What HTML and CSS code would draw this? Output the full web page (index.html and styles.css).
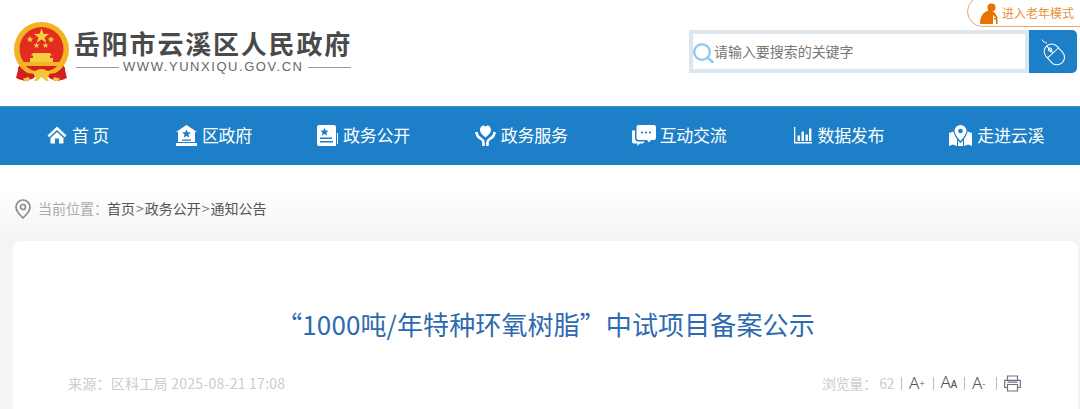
FILE: index.html
```html
<!DOCTYPE html>
<html lang="zh-CN">
<head>
<meta charset="utf-8">
<title>岳阳市云溪区人民政府</title>
<link rel="stylesheet" href="styles.css">
</head>
<body>
<header class="top">
  <div class="brand">
    <svg class="emblem" viewBox="0 0 58 60" width="58" height="60">
      <path d="M6 44 L3 56 L12 59 L19 55 L38 55 L45 59 L54 56 L51 44 Z" fill="#d3201f"/>
      <circle cx="28.500" cy="27.500" r="27.500" fill="#f1b422"/>
      <circle cx="28.500" cy="27" r="22" fill="#e22c20"/>
      <path d="M28.500 6.500l1.900 5.300 5.700.1-4.500 3.500 1.600 5.400-4.700-3.200-4.700 3.200 1.600-5.400-4.500-3.500 5.700-.1z" fill="#f6cf3e"/>
      <path d="M17 14l.9 2.300 2.500.1-2 1.500.7 2.400-2.100-1.400-2.100 1.400.7-2.400-2-1.500 2.500-.1z" fill="#f6cf3e"/>
      <path d="M38 14l.9 2.300 2.500.1-2 1.500.7 2.400-2.100-1.400-2.100 1.400.7-2.400-2-1.500 2.500-.1z" fill="#f6cf3e"/>
      <path d="M23.500 20.500l.8 2 2.200.1-1.700 1.300.6 2.100-1.900-1.200-1.900 1.200.6-2.100-1.700-1.300 2.200-.1z" fill="#f6cf3e"/>
      <path d="M32.500 20.500l.8 2 2.200.1-1.700 1.300.6 2.100-1.900-1.200-1.900 1.200.6-2.100-1.700-1.300 2.200-.1z" fill="#f6cf3e"/>
      <path d="M20 31h17l2 2.500h-2v2.500h3v4H17v-4h3v-2.500h-2z" fill="#f6cf3e"/>
      <path d="M7 40h43l-1 3c-4 6-12 9-20.500 9S12 49 8 43z" fill="#f1b422"/>
      <path d="M13 44h31c-4 4-9 5.500-15.500 5.500S17 48 13 44z" fill="#d3201f"/>
      <path d="M5 45l9 6 7 1v4l-7 3-9-2z" fill="#d3201f"/>
      <path d="M52 45l-9 6-7 1v4l7 3 9-2z" fill="#d3201f"/>
      <path d="M20 51c3-3 5.500-4 8.500-4s5.500 1 8.500 4l-3 5 2 3h-3l-4.500-4-4.500 4h-3l2-3z" fill="#f4c63a"/>
      <path d="M10 56.500l6-1.500 1 3-5 1.500zM47 56.500l-6-1.500-1 3 5 1.500z" fill="#f4c63a"/>
    </svg>
    <div class="brand-text">
      <div class="brand-name">岳阳市云溪区人民政府</div>
      <div class="brand-url"><span class="rule"></span><span>WWW.YUNXIQU.GOV.CN</span><span class="rule"></span></div>
    </div>
  </div>
  <div class="tools">
    <a class="elder">
      <svg viewBox="0 0 20 22" width="20" height="22">
        <circle cx="12.500" cy="4.500" r="4" fill="#e67300"/>
        <path d="M8 8c3-1 6 0 8 2l3 5h-2l-3-3v9H1c0-6 2-11 7-13z" fill="#e67300"/>
        <path d="M15 15h3.500v6H17v-4.500h-2z" fill="#e67300"/>
      </svg>
      <span>进入老年模式</span>
    </a>
    <form class="search">
      <div class="search-box">
        <svg class="search-icon" viewBox="0 0 22 22" width="22" height="22">
          <circle cx="10" cy="10" r="7.800" fill="none" stroke="#8ccbf5" stroke-width="2.400"/>
          <path d="M15.500 15.500l5 4.500" stroke="#8ccbf5" stroke-width="2.600" stroke-linecap="round"/>
        </svg>
        <span class="placeholder">请输入要搜索的关键字</span>
      </div>
      <div class="search-btn">
        <svg viewBox="0 0 28 28" width="28" height="28" fill="none" stroke="#fff" stroke-width="1">
          <path d="M3 1.500c1 2.500 3 3 5 3.500"/>
          <g transform="rotate(-42 15 16)">
            <rect x="7.500" y="5" width="15" height="23" rx="7.500"/>
            <path d="M7.700 14.500h14.600M15 5v9.500"/>
            <rect x="13.500" y="8.500" width="3" height="3.500" rx="1.500"/>
          </g>
        </svg>
      </div>
    </form>
  </div>
</header>

<nav class="nav">
  <a class="nav-item nav-home">
    <svg viewBox="0 0 20 20" width="20" height="20" fill="#fff"><path d="M10 1.500L.5 10.500l1.800 1.800L10 5l7.700 7.300 1.800-1.800z"/><path d="M10 7l-6.500 6v5.500h4.500v-5h4v5h4.500V13z"/></svg>
    <span>首 页</span>
  </a>
  <a class="nav-item">
    <svg viewBox="0 0 21 21" width="21" height="21" fill="#fff"><path d="M10.500 0L0 7h2v10h17V7h2z"/><path d="M0 18h21v3H0z"/><path d="M10.500 4.500l1.300 2.800 3 .3-2.300 2 .7 3-2.700-1.500-2.700 1.500.7-3-2.300-2 3-.3z" fill="#1c7fc7"/><path d="M6 14.500h9v1.300H6z" fill="#1c7fc7"/></svg>
    <span>区政府</span>
  </a>
  <a class="nav-item">
    <svg viewBox="0 0 21 21" width="21" height="21" fill="#fff"><path d="M2 0h15a2 2 0 0 1 2 2v19H2a2 2 0 0 1-2-2V2a2 2 0 0 1 2-2z"/><path d="M20 8h1v11h-1z"/><path d="M7.500 3l1.200 2.500 2.800.3-2.100 1.900.6 2.700L7.500 9l-2.500 1.400.6-2.700-2.100-1.900 2.800-.3z" fill="#1c7fc7"/><path d="M3 12.500h12v1.500H3zM3 16h13v1.500H3z" fill="#1c7fc7"/></svg>
    <span>政务公开</span>
  </a>
  <a class="nav-item">
    <svg viewBox="0 0 21 21" width="21" height="21" fill="#fff"><path d="M10.500 12.500C6.500 9.500 5 7.500 5 4.800 5 2 7 .5 8.500.5c1 0 1.500.6 2 1.300.5-.7 1-1.300 2-1.300C14 .5 16 2 16 4.800c0 2.700-1.500 4.700-5.500 7.700z"/><path d="M1.500 7c0 4 2.500 5.700 4.700 7 1.300.8 2.300 1.400 2.300 3.500V21M19.500 7c0 4-2.500 5.700-4.700 7-1.300.8-2.300 1.400-2.300 3.500V21" fill="none" stroke="#fff" stroke-width="2.600"/></svg>
    <span>政务服务</span>
  </a>
  <a class="nav-item nav-chat">
    <svg viewBox="0 0 24 21" width="24" height="21" fill="#fff"><path d="M6.500 0H22a2 2 0 0 1 2 2v11a2 2 0 0 1-2 2h-3l-2 2.500L15 15H6.500a2 2 0 0 1-2-2V2a2 2 0 0 1 2-2z"/><circle cx="10" cy="7.500" r="1.100" fill="#1c7fc7"/><circle cx="14" cy="7.500" r="1.100" fill="#1c7fc7"/><circle cx="18" cy="7.500" r="1.100" fill="#1c7fc7"/><path d="M0 5.500h3v8c0 1.500 1 3 3 3h7l-2 2H8L5.500 21v-2.500H2a2 2 0 0 1-2-2z"/></svg>
    <span>互动交流</span>
  </a>
  <a class="nav-item nav-data">
    <svg viewBox="0 0 18 18" width="18" height="18" fill="#fff"><path d="M0 1h1.300v15H18v1.500H0z"/><path d="M3.500 9.500h2.400V15H3.500zM7.500 5.500h2.400V15H7.500zM11.500 8.500h2.400V15h-2.400zM15 2.500h2.400V15H15z"/></svg>
    <span>数据发布</span>
  </a>
  <a class="nav-item">
    <svg viewBox="0 0 23 21" width="23" height="21" fill="#fff"><path fill-rule="evenodd" d="M11.500 0A6 6 0 0 0 5.500 6c0 3.500 6 10 6 10s6-6.500 6-10a6 6 0 0 0-6-6zm0 8.300a2.300 2.300 0 1 1 0-4.600 2.300 2.300 0 0 1 0 4.600z"/><path d="M0 8l4.500-1.500c.3 2.500 2 5.500 3.500 7.500v7L4 19.500 0 21z"/><path d="M9 15.500l2.500 2.700 2.500-2.700V21H9z"/><path d="M23 8l-4.500-1.500c-.3 2.500-2 5.500-3.500 7.500v7l4-1.500 4 1.500z"/></svg>
    <span>走进云溪</span>
  </a>
</nav>

<main class="page">
  <div class="crumbs">
    <svg viewBox="0 0 16 20" width="16" height="20" fill="none" stroke="#8c8c8c" stroke-width="1.700"><path d="M8 1a7 7 0 0 0-7 7c0 4.500 7 11 7 11s7-6.500 7-11a7 7 0 0 0-7-7z"/><circle cx="8" cy="8" r="2.500"/></svg>
    <div class="crumb-text"><span class="crumb-label">当前位置：</span><span class="crumb-path">首页<i>&gt;</i>政务公开<i>&gt;</i>通知公告</span></div>
  </div>
  <article class="card">
    <h1 class="title">“1000吨/年特种环氧树脂”中试项目备案公示</h1>
    <div class="meta">
      <div class="source">来源：区科工局 2025-08-21 17:08</div>
      <div class="actions">
        <span class="views">浏览量： 62</span>
        <span class="sep"></span>
        <span class="font-btn">A<sup>+</sup></span>
        <span class="sep"></span>
        <span class="font-btn">A<small>A</small></span>
        <span class="sep"></span>
        <span class="font-btn">A<sup>-</sup></span>
        <span class="sep"></span>
        <svg viewBox="0 0 17 17" width="17" height="17" fill="none" stroke="#6b7280" stroke-width="1.200"><path d="M3.500 5V1h10v4M3.500 12.500H.7V5.300h15.600v7.200h-2.800"/><path d="M3.500 9.500h10V16h-10zM3.500 7.200h10"/></svg>
      </div>
    </div>
  </article>
</main>
</body>
</html>
```

FILE: styles.css
```css
* { box-sizing: border-box; }
html, body { margin: 0; padding: 0; }
body {
  width: 1080px;
  height: 409px;
  overflow: hidden;
  background: #fff;
  font-family: "Noto Sans CJK SC", "Liberation Sans", sans-serif;
}

.top {
  height: 106px;
  display: flex;
  justify-content: space-between;
}
.brand {
  display: flex;
  align-items: flex-start;
  padding: 22px 0 0 13px;
}
.emblem { flex: none; }
.brand-text { margin: 6px 0 0 3px; }
.brand-name {
  font-size: 26px;
  line-height: 30px;
  font-weight: 700;
  color: #4a4a4a;
  letter-spacing: 1.800px;
  white-space: nowrap;
}
.brand-url {
  display: flex;
  align-items: center;
  gap: 4px;
  margin: 1px 0 0 2px;
  font-family: "Liberation Sans", sans-serif;
  font-size: 13px;
  line-height: 16px;
  letter-spacing: 1.550px;
  color: #666;
  white-space: nowrap;
}
.rule { width: 43px; height: 1px; background: #999; }

.tools {
  width: 391px;
  position: relative;
  padding-top: 30px;
}
.elder {
  position: absolute;
  top: -4px;
  left: 278px;
  width: 130px;
  height: 31px;
  padding: 1px 0 0 11px;
  display: flex;
  align-items: center;
  gap: 3px;
  border: 1px solid #f0a868;
  border-radius: 16px;
  font-size: 12px;
  color: #e88f3c;
  white-space: nowrap;
}
.elder svg { margin-top: 3px; }
.search { display: flex; width: 388px; height: 43px; }
.search-box {
  width: 340px;
  border: 4px solid #dbe6ee;
  background: #fff;
  display: flex;
  align-items: center;
  padding-bottom: 2px;
}
.search-icon { flex: none; margin-left: -1px; margin-top: 4px; }
.placeholder { font-size: 14px; letter-spacing: -.05px; color: #777; white-space: nowrap; }
.search-btn {
  width: 48px;
  background: #1c7fc7;
  border-radius: 0 5px 5px 0;
  display: flex;
  align-items: center;
  justify-content: center;
}

.nav {
  height: 59px;
  background: #1c7fc7;
  border-top: 1px solid #3f93d2;
  display: flex;
  gap: 65px;
  align-items: center;
  padding: 0 0 2px 47px;
}
.nav-item {
  display: flex;
  align-items: center;
  gap: 5px;
  font-size: 17px;
  line-height: 24px;
  letter-spacing: -.3px;
  color: #fff;
  white-space: nowrap;
}
.nav-home { margin-right: 2px; }
.nav-chat { margin-left: -1px; gap: 4px; }
.nav-data { margin-left: 3px; }

.page {
  height: 244px;
  background: linear-gradient(#fff 25px, #f4f4f4 75px);
  padding: 0 0 0 13px;
}
.crumbs {
  height: 76px;
  display: flex;
  align-items: center;
  gap: 7px;
  padding: 9px 0 0 2px;
  font-size: 14px;
  white-space: nowrap;
}
.crumbs svg { margin-top: 2px; }
.crumb-label { color: #aaa; margin-right: -1px; }
.crumb-path { color: #555; }
.crumb-path i { font-style: normal; color: #777; margin: 0 1px; }
.card {
  width: 1065px;
  height: 168px;
  background: #fff;
  border-radius: 8px 8px 0 0;
  overflow: hidden;
}
.title {
  margin: 0;
  padding-top: 63px;
  text-align: center;
  font-size: 26px;
  line-height: 40px;
  font-weight: 400;
  letter-spacing: .12px;
  color: #2e6ab1;
  white-space: nowrap;
}
.meta {
  margin-top: 28px;
  padding: 0 57.500px 0 55px;
  display: flex;
  justify-content: space-between;
  align-items: center;
  font-size: 14px;
  line-height: 20px;
  color: #ccc;
}
.source { letter-spacing: .26px; }
.views { letter-spacing: -.4px; }
.actions { display: flex; align-items: center; gap: 7px; }
.sep { width: 1px; height: 13px; background: #bbb; }
.font-btn {
  width: 16.500px;
  font-family: "Noto Sans", "Liberation Sans", sans-serif;
  font-weight: 300;
  font-size: 17px;
  color: #555;
  display: inline-flex;
  align-items: baseline;
}
.font-btn sup { font-size: 10px; line-height: 1; vertical-align: baseline; position: relative; top: -2px; }
.font-btn small { font-size: 10px; font-weight: 500; }
```
